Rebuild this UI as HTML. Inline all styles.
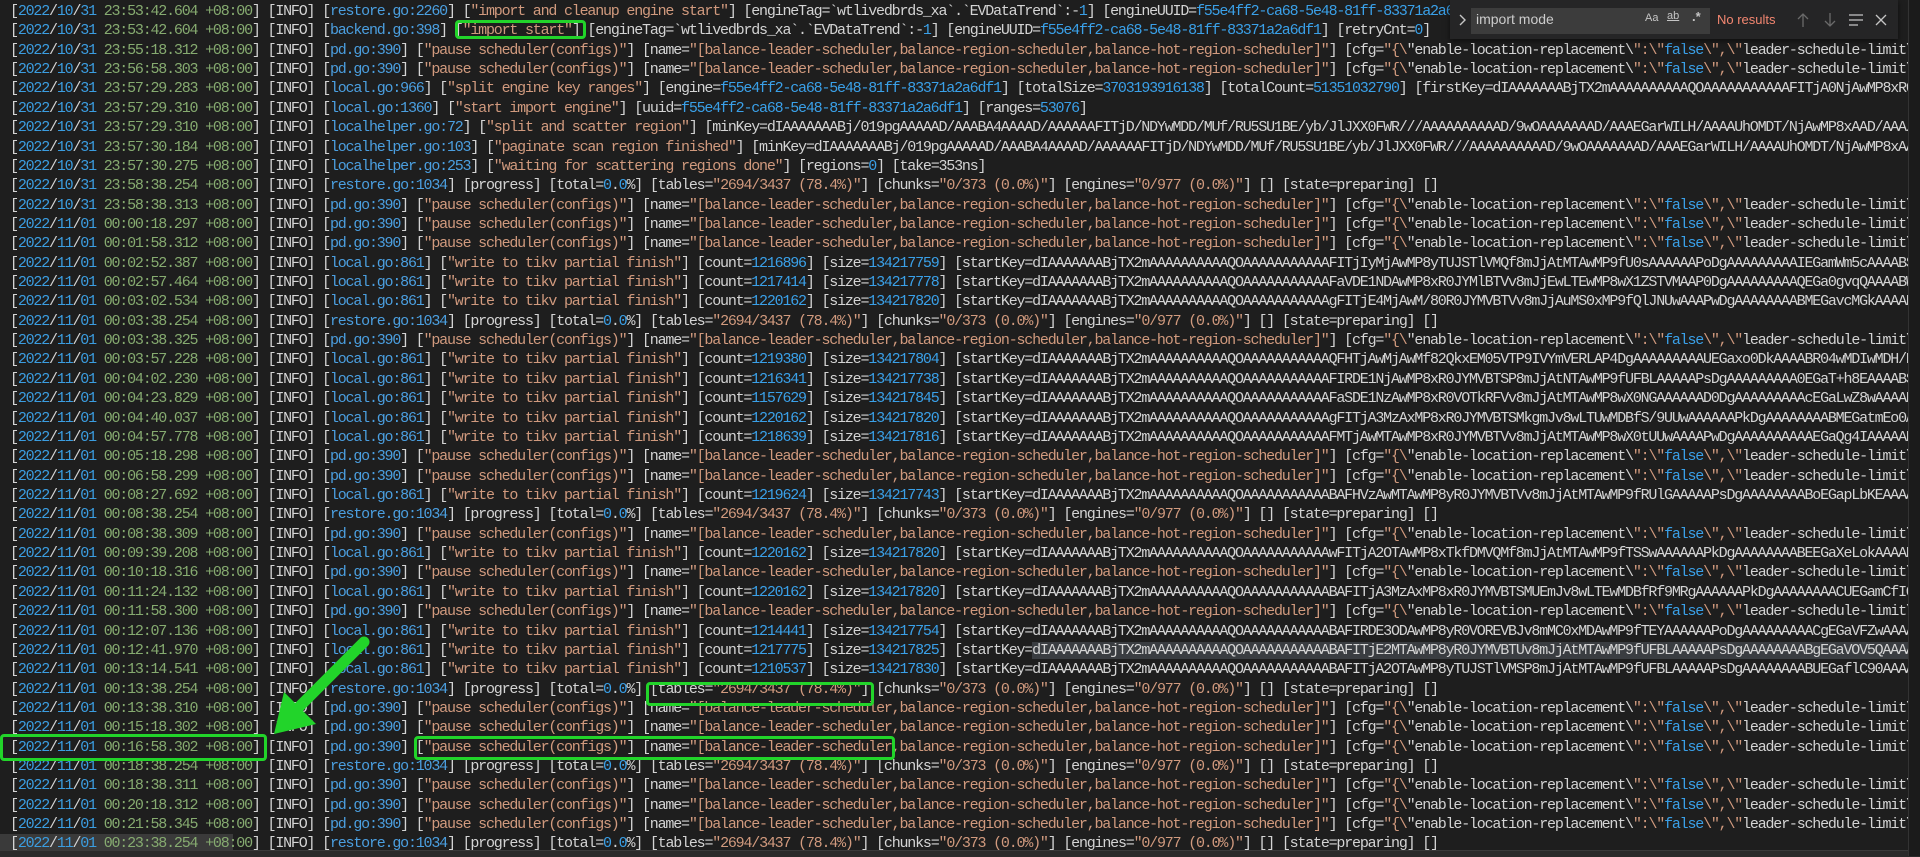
<!DOCTYPE html>
<html><head><meta charset="utf-8"><style>
html,body{margin:0;padding:0;background:#1e1e1e;width:1920px;height:856px;overflow:hidden}
#c{position:absolute;left:0;top:2px;width:1908px;font-family:"Liberation Mono",monospace;font-size:15px;letter-spacing:-1.2px;color:#d4d4d4}
.l{height:19.37px;line-height:19.37px;white-space:pre;overflow:hidden;padding-left:10px}
.b{color:#3b9de0}.g{color:#86ab70}.f{color:#4b9fe0}.s{color:#d19a7e}.n{color:#3aa0e8}
.box{position:absolute;border:3px solid #22d42a;border-radius:4px;box-sizing:border-box}
#find{position:absolute;left:1450px;top:0;width:448px;height:39px;background:#252526;box-shadow:0 2px 6px rgba(0,0,0,.6);font-family:"Liberation Sans",sans-serif}
#inp{position:absolute;left:21px;top:8px;width:239px;height:26px;background:#3c3c3c}
</style></head><body>
<div id="c">
<div class="l">[<span class="b">2022</span>/<span class="b">10</span>/<span class="b">31</span> <span class="g">23:53:42.604 +08:00</span>] [INFO] [<span class="f">restore.go:2260</span>] [<span class="s">"import and cleanup engine start"</span>] [engineTag=`wtlivedbrds_xa`.`EVDataTrend`:-<span class="n">1</span>] [engineUUID=<span class="n">f55e4ff2-ca68-5e48-81ff-83371a2a6df1</span>]</div>
<div class="l">[<span class="b">2022</span>/<span class="b">10</span>/<span class="b">31</span> <span class="g">23:53:42.604 +08:00</span>] [INFO] [<span class="f">backend.go:398</span>] [<span class="s">"import start"</span>] [engineTag=`wtlivedbrds_xa`.`EVDataTrend`:-<span class="n">1</span>] [engineUUID=<span class="n">f55e4ff2-ca68-5e48-81ff-83371a2a6df1</span>] [retryCnt=<span class="n">0</span>]</div>
<div class="l">[<span class="b">2022</span>/<span class="b">10</span>/<span class="b">31</span> <span class="g">23:55:18.312 +08:00</span>] [INFO] [<span class="f">pd.go:390</span>] [<span class="s">"pause scheduler(configs)"</span>] [name=<span class="s">"[balance-leader-scheduler,balance-region-scheduler,balance-hot-region-scheduler]"</span>] [cfg=<span class="s">"{\</span>"enable-location-replacement\<span class="s">":\"</span><span class="n">false</span><span class="s">\",\"</span>leader-schedule-limit\":\"4\",\"max-merge-region-keys\"</div>
<div class="l">[<span class="b">2022</span>/<span class="b">10</span>/<span class="b">31</span> <span class="g">23:56:58.303 +08:00</span>] [INFO] [<span class="f">pd.go:390</span>] [<span class="s">"pause scheduler(configs)"</span>] [name=<span class="s">"[balance-leader-scheduler,balance-region-scheduler,balance-hot-region-scheduler]"</span>] [cfg=<span class="s">"{\</span>"enable-location-replacement\<span class="s">":\"</span><span class="n">false</span><span class="s">\",\"</span>leader-schedule-limit\":\"4\",\"max-merge-region-keys\"</div>
<div class="l">[<span class="b">2022</span>/<span class="b">10</span>/<span class="b">31</span> <span class="g">23:57:29.283 +08:00</span>] [INFO] [<span class="f">local.go:966</span>] [<span class="s">"split engine key ranges"</span>] [engine=<span class="n">f55e4ff2-ca68-5e48-81ff-83371a2a6df1</span>] [totalSize=<span class="n">3703193916138</span>] [totalCount=<span class="n">51351032790</span>] [firstKey=dIAAAAAAABjTX2mAAAAAAAAAAQOAAAAAAAAAAAFITjA0NjAwMP8xR0\AAAAAAAA</div>
<div class="l">[<span class="b">2022</span>/<span class="b">10</span>/<span class="b">31</span> <span class="g">23:57:29.310 +08:00</span>] [INFO] [<span class="f">local.go:1360</span>] [<span class="s">"start import engine"</span>] [uuid=<span class="n">f55e4ff2-ca68-5e48-81ff-83371a2a6df1</span>] [ranges=<span class="n">53076</span>]</div>
<div class="l">[<span class="b">2022</span>/<span class="b">10</span>/<span class="b">31</span> <span class="g">23:57:29.310 +08:00</span>] [INFO] [<span class="f">localhelper.go:72</span>] [<span class="s">"split and scatter region"</span>] [minKey=dIAAAAAAABj/019pgAAAAAD/AAABA4AAAAD/AAAAAAFITjD/NDYwMDD/MUf/RU5SU1BE/yb/JlJXX0FWR///AAAAAAAAAAD/9wOAAAAAAAD/AAAEGarWILH/AAAAUhOMDT/NjAwMP8xAAD/AAA/AAAA</div>
<div class="l">[<span class="b">2022</span>/<span class="b">10</span>/<span class="b">31</span> <span class="g">23:57:30.184 +08:00</span>] [INFO] [<span class="f">localhelper.go:103</span>] [<span class="s">"paginate scan region finished"</span>] [minKey=dIAAAAAAABj/019pgAAAAAD/AAABA4AAAAD/AAAAAAFITjD/NDYwMDD/MUf/RU5SU1BE/yb/JlJXX0FWR///AAAAAAAAAAD/9wOAAAAAAAD/AAAEGarWILH/AAAAUhOMDT/NjAwMP8xAAD/AAAAAAA</div>
<div class="l">[<span class="b">2022</span>/<span class="b">10</span>/<span class="b">31</span> <span class="g">23:57:30.275 +08:00</span>] [INFO] [<span class="f">localhelper.go:253</span>] [<span class="s">"waiting for scattering regions done"</span>] [regions=<span class="n">0</span>] [take=353ns]</div>
<div class="l">[<span class="b">2022</span>/<span class="b">10</span>/<span class="b">31</span> <span class="g">23:58:38.254 +08:00</span>] [INFO] [<span class="f">restore.go:1034</span>] [progress] [total=<span class="n">0</span>.<span class="n">0</span>%] [tables=<span class="s">"2694/3437 (78.4%)"</span>] [chunks=<span class="s">"0/373 (0.0%)"</span>] [engines=<span class="s">"0/977 (0.0%)"</span>] [] [state=preparing] []</div>
<div class="l">[<span class="b">2022</span>/<span class="b">10</span>/<span class="b">31</span> <span class="g">23:58:38.313 +08:00</span>] [INFO] [<span class="f">pd.go:390</span>] [<span class="s">"pause scheduler(configs)"</span>] [name=<span class="s">"[balance-leader-scheduler,balance-region-scheduler,balance-hot-region-scheduler]"</span>] [cfg=<span class="s">"{\</span>"enable-location-replacement\<span class="s">":\"</span><span class="n">false</span><span class="s">\",\"</span>leader-schedule-limit\":\"4\",\"max-merge-region-keys\"</div>
<div class="l">[<span class="b">2022</span>/<span class="b">11</span>/<span class="b">01</span> <span class="g">00:00:18.297 +08:00</span>] [INFO] [<span class="f">pd.go:390</span>] [<span class="s">"pause scheduler(configs)"</span>] [name=<span class="s">"[balance-leader-scheduler,balance-region-scheduler,balance-hot-region-scheduler]"</span>] [cfg=<span class="s">"{\</span>"enable-location-replacement\<span class="s">":\"</span><span class="n">false</span><span class="s">\",\"</span>leader-schedule-limit\":\"4\",\"max-merge-region-keys\"</div>
<div class="l">[<span class="b">2022</span>/<span class="b">11</span>/<span class="b">01</span> <span class="g">00:01:58.312 +08:00</span>] [INFO] [<span class="f">pd.go:390</span>] [<span class="s">"pause scheduler(configs)"</span>] [name=<span class="s">"[balance-leader-scheduler,balance-region-scheduler,balance-hot-region-scheduler]"</span>] [cfg=<span class="s">"{\</span>"enable-location-replacement\<span class="s">":\"</span><span class="n">false</span><span class="s">\",\"</span>leader-schedule-limit\":\"4\",\"max-merge-region-keys\"</div>
<div class="l">[<span class="b">2022</span>/<span class="b">11</span>/<span class="b">01</span> <span class="g">00:02:52.387 +08:00</span>] [INFO] [<span class="f">local.go:861</span>] [<span class="s">"write to tikv partial finish"</span>] [count=<span class="n">1216896</span>] [size=<span class="n">134217759</span>] [startKey=dIAAAAAAABjTX2mAAAAAAAAAAQOAAAAAAAAAAAFITjIyMjAwMP8yTUJSTlVMQf8mJjAtMTAwMP9fU0sAAAAAAPoDgAAAAAAAAAIEGamWm5cAAAABSEAAAA</div>
<div class="l">[<span class="b">2022</span>/<span class="b">11</span>/<span class="b">01</span> <span class="g">00:02:57.464 +08:00</span>] [INFO] [<span class="f">local.go:861</span>] [<span class="s">"write to tikv partial finish"</span>] [count=<span class="n">1217414</span>] [size=<span class="n">134217778</span>] [startKey=dIAAAAAAABjTX2mAAAAAAAAAAQOAAAAAAAAAAAFaVDE1NDAwMP8xR0JYMlBTVv8mJjEwLTEwMP8wX1ZSTVMAAP0DgAAAAAAAAAQEGa0gvqQAAAABWAAAA</div>
<div class="l">[<span class="b">2022</span>/<span class="b">11</span>/<span class="b">01</span> <span class="g">00:03:02.534 +08:00</span>] [INFO] [<span class="f">local.go:861</span>] [<span class="s">"write to tikv partial finish"</span>] [count=<span class="n">1220162</span>] [size=<span class="n">134217820</span>] [startKey=dIAAAAAAABjTX2mAAAAAAAAAAQOAAAAAAAAAAAgFITjE4MjAwM/80R0JYMVBTVv8mJjAuMS0xMP9fQlJNUwAAAPwDgAAAAAAAABMEGavcMGkAAAABSEAAAA</div>
<div class="l">[<span class="b">2022</span>/<span class="b">11</span>/<span class="b">01</span> <span class="g">00:03:38.254 +08:00</span>] [INFO] [<span class="f">restore.go:1034</span>] [progress] [total=<span class="n">0</span>.<span class="n">0</span>%] [tables=<span class="s">"2694/3437 (78.4%)"</span>] [chunks=<span class="s">"0/373 (0.0%)"</span>] [engines=<span class="s">"0/977 (0.0%)"</span>] [] [state=preparing] []</div>
<div class="l">[<span class="b">2022</span>/<span class="b">11</span>/<span class="b">01</span> <span class="g">00:03:38.325 +08:00</span>] [INFO] [<span class="f">pd.go:390</span>] [<span class="s">"pause scheduler(configs)"</span>] [name=<span class="s">"[balance-leader-scheduler,balance-region-scheduler,balance-hot-region-scheduler]"</span>] [cfg=<span class="s">"{\</span>"enable-location-replacement\<span class="s">":\"</span><span class="n">false</span><span class="s">\",\"</span>leader-schedule-limit\":\"4\",\"max-merge-region-keys\"</div>
<div class="l">[<span class="b">2022</span>/<span class="b">11</span>/<span class="b">01</span> <span class="g">00:03:57.228 +08:00</span>] [INFO] [<span class="f">local.go:861</span>] [<span class="s">"write to tikv partial finish"</span>] [count=<span class="n">1219380</span>] [size=<span class="n">134217804</span>] [startKey=dIAAAAAAABjTX2mAAAAAAAAAAQOAAAAAAAAAAAQFHTjAwMjAwMf82QkxEM05VTP9IVYmVERLAP4DgAAAAAAAAAUEGaxo0DkAAAABR04wMDIwMDH/NgAAA</div>
<div class="l">[<span class="b">2022</span>/<span class="b">11</span>/<span class="b">01</span> <span class="g">00:04:02.230 +08:00</span>] [INFO] [<span class="f">local.go:861</span>] [<span class="s">"write to tikv partial finish"</span>] [count=<span class="n">1216341</span>] [size=<span class="n">134217738</span>] [startKey=dIAAAAAAABjTX2mAAAAAAAAAAQOAAAAAAAAAAAFIRDE1NjAwMP8xR0JYMVBTSP8mJjAtNTAwMP9fUFBLAAAAAPsDgAAAAAAAAA0EGaT+h8EAAAABSEAAAA</div>
<div class="l">[<span class="b">2022</span>/<span class="b">11</span>/<span class="b">01</span> <span class="g">00:04:23.829 +08:00</span>] [INFO] [<span class="f">local.go:861</span>] [<span class="s">"write to tikv partial finish"</span>] [count=<span class="n">1157629</span>] [size=<span class="n">134217845</span>] [startKey=dIAAAAAAABjTX2mAAAAAAAAAAQOAAAAAAAAAAAFaSDE1NzAwMP8xR0VOTkRFVv8mJjAtMTAwMP8wX0NGAAAAAAD0DgAAAAAAAAAcEGaLwZ8wAAAABWAAAA</div>
<div class="l">[<span class="b">2022</span>/<span class="b">11</span>/<span class="b">01</span> <span class="g">00:04:40.037 +08:00</span>] [INFO] [<span class="f">local.go:861</span>] [<span class="s">"write to tikv partial finish"</span>] [count=<span class="n">1220162</span>] [size=<span class="n">134217820</span>] [startKey=dIAAAAAAABjTX2mAAAAAAAAAAQOAAAAAAAAAAAgFITjA3MzAxMP8xR0JYMVBTSMkgmJv8wLTUwMDBfS/9UUwAAAAAAPkDgAAAAAAAABMEGatmEo0AAAABSEAAAA</div>
<div class="l">[<span class="b">2022</span>/<span class="b">11</span>/<span class="b">01</span> <span class="g">00:04:57.778 +08:00</span>] [INFO] [<span class="f">local.go:861</span>] [<span class="s">"write to tikv partial finish"</span>] [count=<span class="n">1218639</span>] [size=<span class="n">134217816</span>] [startKey=dIAAAAAAABjTX2mAAAAAAAAAAQOAAAAAAAAAAAFMTjAwMTAwMP8xR0JYMVBTVv8mJjAtMTAwMP8wX0tUUwAAAAPwDgAAAAAAAAAAEGaQg4IAAAAABTEAAAA</div>
<div class="l">[<span class="b">2022</span>/<span class="b">11</span>/<span class="b">01</span> <span class="g">00:05:18.298 +08:00</span>] [INFO] [<span class="f">pd.go:390</span>] [<span class="s">"pause scheduler(configs)"</span>] [name=<span class="s">"[balance-leader-scheduler,balance-region-scheduler,balance-hot-region-scheduler]"</span>] [cfg=<span class="s">"{\</span>"enable-location-replacement\<span class="s">":\"</span><span class="n">false</span><span class="s">\",\"</span>leader-schedule-limit\":\"4\",\"max-merge-region-keys\"</div>
<div class="l">[<span class="b">2022</span>/<span class="b">11</span>/<span class="b">01</span> <span class="g">00:06:58.299 +08:00</span>] [INFO] [<span class="f">pd.go:390</span>] [<span class="s">"pause scheduler(configs)"</span>] [name=<span class="s">"[balance-leader-scheduler,balance-region-scheduler,balance-hot-region-scheduler]"</span>] [cfg=<span class="s">"{\</span>"enable-location-replacement\<span class="s">":\"</span><span class="n">false</span><span class="s">\",\"</span>leader-schedule-limit\":\"4\",\"max-merge-region-keys\"</div>
<div class="l">[<span class="b">2022</span>/<span class="b">11</span>/<span class="b">01</span> <span class="g">00:08:27.692 +08:00</span>] [INFO] [<span class="f">local.go:861</span>] [<span class="s">"write to tikv partial finish"</span>] [count=<span class="n">1219624</span>] [size=<span class="n">134217743</span>] [startKey=dIAAAAAAABjTX2mAAAAAAAAAAQOAAAAAAAAAAABAFHVzAwMTAwMP8yR0JYMVBTVv8mJjAtMTAwMP9fRUlGAAAAAPsDgAAAAAAAABoEGapLbKEAAAABRJAAAA</div>
<div class="l">[<span class="b">2022</span>/<span class="b">11</span>/<span class="b">01</span> <span class="g">00:08:38.254 +08:00</span>] [INFO] [<span class="f">restore.go:1034</span>] [progress] [total=<span class="n">0</span>.<span class="n">0</span>%] [tables=<span class="s">"2694/3437 (78.4%)"</span>] [chunks=<span class="s">"0/373 (0.0%)"</span>] [engines=<span class="s">"0/977 (0.0%)"</span>] [] [state=preparing] []</div>
<div class="l">[<span class="b">2022</span>/<span class="b">11</span>/<span class="b">01</span> <span class="g">00:08:38.309 +08:00</span>] [INFO] [<span class="f">pd.go:390</span>] [<span class="s">"pause scheduler(configs)"</span>] [name=<span class="s">"[balance-leader-scheduler,balance-region-scheduler,balance-hot-region-scheduler]"</span>] [cfg=<span class="s">"{\</span>"enable-location-replacement\<span class="s">":\"</span><span class="n">false</span><span class="s">\",\"</span>leader-schedule-limit\":\"4\",\"max-merge-region-keys\"</div>
<div class="l">[<span class="b">2022</span>/<span class="b">11</span>/<span class="b">01</span> <span class="g">00:09:39.208 +08:00</span>] [INFO] [<span class="f">local.go:861</span>] [<span class="s">"write to tikv partial finish"</span>] [count=<span class="n">1220162</span>] [size=<span class="n">134217820</span>] [startKey=dIAAAAAAABjTX2mAAAAAAAAAAQOAAAAAAAAAAAwFITjA2OTAwMP8xTkfDMVQMf8mJjAtMTAwMP9fTSSwAAAAAAPkDgAAAAAAAABEEGaXeLokAAAABSEAAAA</div>
<div class="l">[<span class="b">2022</span>/<span class="b">11</span>/<span class="b">01</span> <span class="g">00:10:18.316 +08:00</span>] [INFO] [<span class="f">pd.go:390</span>] [<span class="s">"pause scheduler(configs)"</span>] [name=<span class="s">"[balance-leader-scheduler,balance-region-scheduler,balance-hot-region-scheduler]"</span>] [cfg=<span class="s">"{\</span>"enable-location-replacement\<span class="s">":\"</span><span class="n">false</span><span class="s">\",\"</span>leader-schedule-limit\":\"4\",\"max-merge-region-keys\"</div>
<div class="l">[<span class="b">2022</span>/<span class="b">11</span>/<span class="b">01</span> <span class="g">00:11:24.132 +08:00</span>] [INFO] [<span class="f">local.go:861</span>] [<span class="s">"write to tikv partial finish"</span>] [count=<span class="n">1220162</span>] [size=<span class="n">134217820</span>] [startKey=dIAAAAAAABjTX2mAAAAAAAAAAQOAAAAAAAAAAABAFITjA3MzAxMP8xR0JYMVBTSMUEmJv8wLTEwMDBfRf9MRgAAAAAAPkDgAAAAAAAACUEGamCfIQAAAABSEAAAA</div>
<div class="l">[<span class="b">2022</span>/<span class="b">11</span>/<span class="b">01</span> <span class="g">00:11:58.300 +08:00</span>] [INFO] [<span class="f">pd.go:390</span>] [<span class="s">"pause scheduler(configs)"</span>] [name=<span class="s">"[balance-leader-scheduler,balance-region-scheduler,balance-hot-region-scheduler]"</span>] [cfg=<span class="s">"{\</span>"enable-location-replacement\<span class="s">":\"</span><span class="n">false</span><span class="s">\",\"</span>leader-schedule-limit\":\"4\",\"max-merge-region-keys\"</div>
<div class="l">[<span class="b">2022</span>/<span class="b">11</span>/<span class="b">01</span> <span class="g">00:12:07.136 +08:00</span>] [INFO] [<span class="f">local.go:861</span>] [<span class="s">"write to tikv partial finish"</span>] [count=<span class="n">1214441</span>] [size=<span class="n">134217754</span>] [startKey=dIAAAAAAABjTX2mAAAAAAAAAAQOAAAAAAAAAAABAFIRDE3ODAwMP8yR0VOREVBJv8mMC0xMDAwMP9fTEYAAAAAAPoDgAAAAAAAAACgEGaVFZwAAAABSEAAAA</div>
<div class="l">[<span class="b">2022</span>/<span class="b">11</span>/<span class="b">01</span> <span class="g">00:12:41.970 +08:00</span>] [INFO] [<span class="f">local.go:861</span>] [<span class="s">"write to tikv partial finish"</span>] [count=<span class="n">1217775</span>] [size=<span class="n">134217825</span>] [startKey=<span style="background:#3a3d41">dIAAAAAAABjTX2mAAAAAAAAAAQOAAAAAAAAAAABAFITjE2MTAwMP8yR0JYMVBTUv8mJjAtMTAwMP9fUFBLAAAAAPsDgAAAAAAAABgEGaVOV5QAAAABSEAAAAAAAAAAAAAA</span></div>
<div class="l">[<span class="b">2022</span>/<span class="b">11</span>/<span class="b">01</span> <span class="g">00:13:14.541 +08:00</span>] [INFO] [<span class="f">local.go:861</span>] [<span class="s">"write to tikv partial finish"</span>] [count=<span class="n">1210537</span>] [size=<span class="n">134217830</span>] [startKey=dIAAAAAAABjTX2mAAAAAAAAAAQOAAAAAAAAAAABAFITjA2OTAwMP8yTUJSTlVMSP8mJjAtMTAwMP9fUFBLAAAAAPsDgAAAAAAAABUEGaflC90AAAABSEAAAA</div>
<div class="l">[<span class="b">2022</span>/<span class="b">11</span>/<span class="b">01</span> <span class="g">00:13:38.254 +08:00</span>] [INFO] [<span class="f">restore.go:1034</span>] [progress] [total=<span class="n">0</span>.<span class="n">0</span>%] [tables=<span class="s">"2694/3437 (78.4%)"</span>] [chunks=<span class="s">"0/373 (0.0%)"</span>] [engines=<span class="s">"0/977 (0.0%)"</span>] [] [state=preparing] []</div>
<div class="l">[<span class="b">2022</span>/<span class="b">11</span>/<span class="b">01</span> <span class="g">00:13:38.310 +08:00</span>] [INFO] [<span class="f">pd.go:390</span>] [<span class="s">"pause scheduler(configs)"</span>] [name=<span class="s">"[balance-leader-scheduler,balance-region-scheduler,balance-hot-region-scheduler]"</span>] [cfg=<span class="s">"{\</span>"enable-location-replacement\<span class="s">":\"</span><span class="n">false</span><span class="s">\",\"</span>leader-schedule-limit\":\"4\",\"max-merge-region-keys\"</div>
<div class="l">[<span class="b">2022</span>/<span class="b">11</span>/<span class="b">01</span> <span class="g">00:15:18.302 +08:00</span>] [INFO] [<span class="f">pd.go:390</span>] [<span class="s">"pause scheduler(configs)"</span>] [name=<span class="s">"[balance-leader-scheduler,balance-region-scheduler,balance-hot-region-scheduler]"</span>] [cfg=<span class="s">"{\</span>"enable-location-replacement\<span class="s">":\"</span><span class="n">false</span><span class="s">\",\"</span>leader-schedule-limit\":\"4\",\"max-merge-region-keys\"</div>
<div class="l">[<span class="b">2022</span>/<span class="b">11</span>/<span class="b">01</span> <span class="g">00:16:58.302 +08:00</span>] [INFO] [<span class="f">pd.go:390</span>] [<span class="s">"pause scheduler(configs)"</span>] [name=<span class="s">"[balance-leader-scheduler,balance-region-scheduler,balance-hot-region-scheduler]"</span>] [cfg=<span class="s">"{\</span>"enable-location-replacement\<span class="s">":\"</span><span class="n">false</span><span class="s">\",\"</span>leader-schedule-limit\":\"4\",\"max-merge-region-keys\"</div>
<div class="l">[<span class="b">2022</span>/<span class="b">11</span>/<span class="b">01</span> <span class="g">00:18:38.254 +08:00</span>] [INFO] [<span class="f">restore.go:1034</span>] [progress] [total=<span class="n">0</span>.<span class="n">0</span>%] [tables=<span class="s">"2694/3437 (78.4%)"</span>] [chunks=<span class="s">"0/373 (0.0%)"</span>] [engines=<span class="s">"0/977 (0.0%)"</span>] [] [state=preparing] []</div>
<div class="l">[<span class="b">2022</span>/<span class="b">11</span>/<span class="b">01</span> <span class="g">00:18:38.311 +08:00</span>] [INFO] [<span class="f">pd.go:390</span>] [<span class="s">"pause scheduler(configs)"</span>] [name=<span class="s">"[balance-leader-scheduler,balance-region-scheduler,balance-hot-region-scheduler]"</span>] [cfg=<span class="s">"{\</span>"enable-location-replacement\<span class="s">":\"</span><span class="n">false</span><span class="s">\",\"</span>leader-schedule-limit\":\"4\",\"max-merge-region-keys\"</div>
<div class="l">[<span class="b">2022</span>/<span class="b">11</span>/<span class="b">01</span> <span class="g">00:20:18.312 +08:00</span>] [INFO] [<span class="f">pd.go:390</span>] [<span class="s">"pause scheduler(configs)"</span>] [name=<span class="s">"[balance-leader-scheduler,balance-region-scheduler,balance-hot-region-scheduler]"</span>] [cfg=<span class="s">"{\</span>"enable-location-replacement\<span class="s">":\"</span><span class="n">false</span><span class="s">\",\"</span>leader-schedule-limit\":\"4\",\"max-merge-region-keys\"</div>
<div class="l">[<span class="b">2022</span>/<span class="b">11</span>/<span class="b">01</span> <span class="g">00:21:58.345 +08:00</span>] [INFO] [<span class="f">pd.go:390</span>] [<span class="s">"pause scheduler(configs)"</span>] [name=<span class="s">"[balance-leader-scheduler,balance-region-scheduler,balance-hot-region-scheduler]"</span>] [cfg=<span class="s">"{\</span>"enable-location-replacement\<span class="s">":\"</span><span class="n">false</span><span class="s">\",\"</span>leader-schedule-limit\":\"4\",\"max-merge-region-keys\"</div>
<div class="l" style="background:linear-gradient(90deg,#3a3a3a 0,#3a3a3a 233px,transparent 233px)">[<span class="b">2022</span>/<span class="b">11</span>/<span class="b">01</span> <span class="g">00:23:38.254 +08:00</span>] [INFO] [<span class="f">restore.go:1034</span>] [progress] [total=<span class="n">0</span>.<span class="n">0</span>%] [tables=<span class="s">"2694/3437 (78.4%)"</span>] [chunks=<span class="s">"0/373 (0.0%)"</span>] [engines=<span class="s">"0/977 (0.0%)"</span>] [] [state=preparing] []</div>
</div>

<div style="position:absolute;left:0;top:850px;width:1920px;height:6px;background:#2a2a2a;border-top:1px solid #3a3a3a"></div>
<div style="position:absolute;left:1908px;top:0;width:12px;height:856px;background:#1b1b1b;border-left:1px solid #333"></div>

<div class="box" style="left:455px;top:20px;width:131px;height:19px"></div>
<div class="box" style="left:646px;top:682px;width:228px;height:24px"></div>
<div class="box" style="left:0;top:734px;width:267px;height:27px"></div>
<div class="box" style="left:414px;top:736px;width:481px;height:24px"></div>

<svg style="position:absolute;left:0;top:0" width="1920" height="856">
<line x1="364" y1="642" x2="296" y2="710" stroke="#22d42a" stroke-width="11" stroke-linecap="round"/>
<polygon points="274,734 284,692 316,724" fill="#22d42a"/>
</svg>

<div id="find">
<svg style="position:absolute;left:8px;top:13px" width="10" height="14"><path d="M2 2 L7 7 L2 12" stroke="#c5c5c5" stroke-width="1.4" fill="none"/></svg>
<div id="inp"></div>
<div style="position:absolute;left:26px;top:11px;color:#cccccc;font-size:14px">import mode</div>
<div style="position:absolute;left:195px;top:12px;color:#c5c5c5;font-size:11px">Aa</div>
<div style="position:absolute;left:217px;top:10px;color:#c5c5c5;font-size:11px;text-decoration:underline">ab</div>
<div style="position:absolute;left:242px;top:9px;color:#c5c5c5;font-size:13px;font-weight:bold">.*</div>
<div style="position:absolute;left:267px;top:12px;color:#f48771;font-size:13px">No results</div>
<svg style="position:absolute;left:346px;top:11px" width="90" height="18" fill="none" stroke="#6a6a6a" stroke-width="1.3">
<path d="M7 16 V3 M2 8 L7 3 L12 8"/>
<path d="M34 2 V15 M29 10 L34 15 L39 10"/>
</svg>
<svg style="position:absolute;left:398px;top:12px" width="46" height="16" fill="none" stroke="#c5c5c5" stroke-width="1.3">
<path d="M1 3 H15 M1 8 H15 M1 13 H10"/>
<path d="M28 3 L38 13 M38 3 L28 13"/>
</svg>
</div>
</body></html>
